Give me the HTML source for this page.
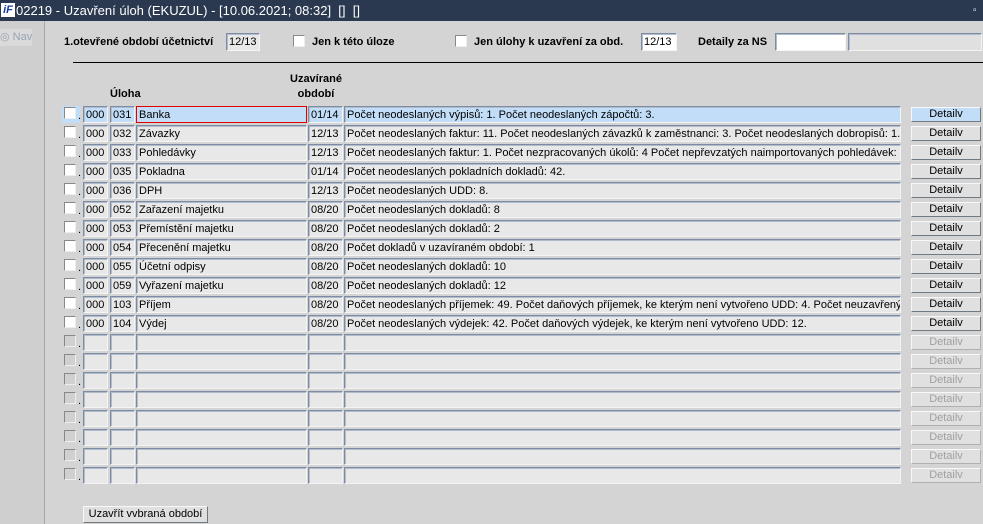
<!DOCTYPE html>
<html><head><meta charset="utf-8"><style>
*{box-sizing:border-box;margin:0;padding:0}
body{width:983px;height:524px;overflow:hidden;background:#d4d4d4;font-family:"Liberation Sans",Arial,sans-serif;font-size:11px;color:#000;position:relative}
.a{position:absolute}
#tb{left:0;top:0;width:983px;height:21px;background:#2a3850;color:#fff;font-size:13px;line-height:21px}
#lp{left:0;top:21px;width:45px;height:503px;background:#cfcfcf;border-right:1px solid #a8a8a8}
.c{position:absolute;height:17px;background:#e8e8e8;border:1px solid;border-color:#7d8ca3 #f4f4f4 #f4f4f4 #7d8ca3;box-shadow:inset 1px 1px 0 #b0bccc;padding-left:2px;padding-top:1px;line-height:15px;white-space:nowrap;overflow:hidden;font-size:11px}
.cb{position:absolute;width:12px;height:12px;background:#fff;border:1px solid;border-color:#888 #eee #eee #888}
.cbd{background:#d0d0d0}
.dot{position:absolute;font-size:11px}
.btn{position:absolute;width:70px;height:15px;background:#e0e0e0;border:1px solid;border-color:#f8f8f8 #707880 #707880 #f8f8f8;text-align:center;line-height:13px;font-size:11px}
.bd{color:#a0a0a0;border-color:#f8f8f8 #b0b0b0 #b0b0b0 #f8f8f8}
.hl{background:#c2ddf7}
b{font-weight:bold}
</style></head><body>
<div id="tb" class="a"><span class="a" style="left:1px;top:3px;width:14px;height:14px;background:#fff;color:#1a3fa0;font:bold italic 11px/14px 'Liberation Sans';text-align:center">iF</span><span class="a" style="left:16px;top:0">02219 - Uzavření úloh (EKUZUL) - [10.06.2021; 08:32] &nbsp;[] &nbsp;[]</span><span class="a" style="left:973px;top:0;font-size:10px">▫</span></div>
<div id="lp" class="a"><div class="a" style="left:0;top:8px;width:32px;height:17px;background:#dadada;color:#9aa4b4;font-size:11px;line-height:17px;white-space:nowrap;overflow:hidden">◎ Nav</div></div>
<b class="a" style="left:64px;top:36px;font-size:11px">1.otevřené období účetnictví</b>
<div class="c" style="left:226px;top:33px;width:34px;height:18px;background:#e8e8e8">12/13</div>
<div class="cb" style="left:293px;top:35px"></div>
<b class="a" style="left:312px;top:36px">Jen k této úloze</b>
<div class="cb" style="left:455px;top:35px"></div>
<b class="a" style="left:474px;top:36px">Jen úlohy k uzavření za obd.</b>
<div class="c" style="left:641px;top:33px;width:36px;height:18px;background:#fff">12/13</div>
<b class="a" style="left:698px;top:36px">Detaily za NS</b>
<div class="c" style="left:775px;top:33px;width:71px;height:18px;background:#fff"></div>
<div class="c" style="left:848px;top:33px;width:134px;height:18px;background:#e0e0e0"></div>
<div class="a" style="left:73px;top:62px;width:910px;height:1px;background:#000"></div>
<b class="a" style="left:110px;top:88px">Úloha</b>
<b class="a" style="left:287px;top:72px;text-align:center;width:58px;line-height:15px">Uzavírané<br>období</b>

<div class="a hl" style="left:62px;top:106px;width:18px;height:17px"></div>
<div class="cb" style="left:64px;top:107px"></div><span class="dot" style="left:78px;top:110px">.</span>
<div class="c hl" style="left:83px;top:106px;width:25px">000</div><div class="c hl" style="left:110px;top:106px;width:25px">031</div><div class="c hl" style="left:136px;top:106px;width:171px;border-color:#e00000;box-shadow:none">Banka</div><div class="c hl" style="left:308px;top:106px;width:35px">01/14</div><div class="c hl" style="left:344px;top:106px;width:557px">Počet neodeslaných výpisů: 1. Počet neodeslaných zápočtů: 3.</div><div class="btn hl" style="left:911px;top:107px">Detailv</div>

<div class="cb" style="left:64px;top:126px"></div><span class="dot" style="left:78px;top:129px">.</span>
<div class="c" style="left:83px;top:125px;width:25px">000</div><div class="c" style="left:110px;top:125px;width:25px">032</div><div class="c" style="left:136px;top:125px;width:171px">Závazky</div><div class="c" style="left:308px;top:125px;width:35px">12/13</div><div class="c" style="left:344px;top:125px;width:557px">Počet neodeslaných faktur: 11. Počet neodeslaných závazků k zaměstnanci: 3. Počet neodeslaných dobropisů: 1.</div><div class="btn" style="left:911px;top:126px">Detailv</div>

<div class="cb" style="left:64px;top:145px"></div><span class="dot" style="left:78px;top:148px">.</span>
<div class="c" style="left:83px;top:144px;width:25px">000</div><div class="c" style="left:110px;top:144px;width:25px">033</div><div class="c" style="left:136px;top:144px;width:171px">Pohledávky</div><div class="c" style="left:308px;top:144px;width:35px">12/13</div><div class="c" style="left:344px;top:144px;width:557px">Počet neodeslaných faktur: 1. Počet nezpracovaných úkolů: 4 Počet nepřevzatých naimportovaných pohledávek: 1</div><div class="btn" style="left:911px;top:145px">Detailv</div>

<div class="cb" style="left:64px;top:164px"></div><span class="dot" style="left:78px;top:167px">.</span>
<div class="c" style="left:83px;top:163px;width:25px">000</div><div class="c" style="left:110px;top:163px;width:25px">035</div><div class="c" style="left:136px;top:163px;width:171px">Pokladna</div><div class="c" style="left:308px;top:163px;width:35px">01/14</div><div class="c" style="left:344px;top:163px;width:557px">Počet neodeslaných pokladních dokladů: 42.</div><div class="btn" style="left:911px;top:164px">Detailv</div>

<div class="cb" style="left:64px;top:183px"></div><span class="dot" style="left:78px;top:186px">.</span>
<div class="c" style="left:83px;top:182px;width:25px">000</div><div class="c" style="left:110px;top:182px;width:25px">036</div><div class="c" style="left:136px;top:182px;width:171px">DPH</div><div class="c" style="left:308px;top:182px;width:35px">12/13</div><div class="c" style="left:344px;top:182px;width:557px">Počet neodeslaných UDD: 8.</div><div class="btn" style="left:911px;top:183px">Detailv</div>

<div class="cb" style="left:64px;top:202px"></div><span class="dot" style="left:78px;top:205px">.</span>
<div class="c" style="left:83px;top:201px;width:25px">000</div><div class="c" style="left:110px;top:201px;width:25px">052</div><div class="c" style="left:136px;top:201px;width:171px">Zařazení majetku</div><div class="c" style="left:308px;top:201px;width:35px">08/20</div><div class="c" style="left:344px;top:201px;width:557px">Počet neodeslaných dokladů: 8</div><div class="btn" style="left:911px;top:202px">Detailv</div>

<div class="cb" style="left:64px;top:221px"></div><span class="dot" style="left:78px;top:224px">.</span>
<div class="c" style="left:83px;top:220px;width:25px">000</div><div class="c" style="left:110px;top:220px;width:25px">053</div><div class="c" style="left:136px;top:220px;width:171px">Přemístění majetku</div><div class="c" style="left:308px;top:220px;width:35px">08/20</div><div class="c" style="left:344px;top:220px;width:557px">Počet neodeslaných dokladů: 2</div><div class="btn" style="left:911px;top:221px">Detailv</div>

<div class="cb" style="left:64px;top:240px"></div><span class="dot" style="left:78px;top:243px">.</span>
<div class="c" style="left:83px;top:239px;width:25px">000</div><div class="c" style="left:110px;top:239px;width:25px">054</div><div class="c" style="left:136px;top:239px;width:171px">Přecenění majetku</div><div class="c" style="left:308px;top:239px;width:35px">08/20</div><div class="c" style="left:344px;top:239px;width:557px">Počet dokladů v uzavíraném období: 1</div><div class="btn" style="left:911px;top:240px">Detailv</div>

<div class="cb" style="left:64px;top:259px"></div><span class="dot" style="left:78px;top:262px">.</span>
<div class="c" style="left:83px;top:258px;width:25px">000</div><div class="c" style="left:110px;top:258px;width:25px">055</div><div class="c" style="left:136px;top:258px;width:171px">Účetní odpisy</div><div class="c" style="left:308px;top:258px;width:35px">08/20</div><div class="c" style="left:344px;top:258px;width:557px">Počet neodeslaných dokladů: 10</div><div class="btn" style="left:911px;top:259px">Detailv</div>

<div class="cb" style="left:64px;top:278px"></div><span class="dot" style="left:78px;top:281px">.</span>
<div class="c" style="left:83px;top:277px;width:25px">000</div><div class="c" style="left:110px;top:277px;width:25px">059</div><div class="c" style="left:136px;top:277px;width:171px">Vyřazení majetku</div><div class="c" style="left:308px;top:277px;width:35px">08/20</div><div class="c" style="left:344px;top:277px;width:557px">Počet neodeslaných dokladů: 12</div><div class="btn" style="left:911px;top:278px">Detailv</div>

<div class="cb" style="left:64px;top:297px"></div><span class="dot" style="left:78px;top:300px">.</span>
<div class="c" style="left:83px;top:296px;width:25px">000</div><div class="c" style="left:110px;top:296px;width:25px">103</div><div class="c" style="left:136px;top:296px;width:171px">Příjem</div><div class="c" style="left:308px;top:296px;width:35px">08/20</div><div class="c" style="left:344px;top:296px;width:557px">Počet neodeslaných příjemek: 49. Počet daňových příjemek, ke kterým není vytvořeno UDD: 4. Počet neuzavřených</div><div class="btn" style="left:911px;top:297px">Detailv</div>

<div class="cb" style="left:64px;top:316px"></div><span class="dot" style="left:78px;top:319px">.</span>
<div class="c" style="left:83px;top:315px;width:25px">000</div><div class="c" style="left:110px;top:315px;width:25px">104</div><div class="c" style="left:136px;top:315px;width:171px">Výdej</div><div class="c" style="left:308px;top:315px;width:35px">08/20</div><div class="c" style="left:344px;top:315px;width:557px">Počet neodeslaných výdejek: 42. Počet daňových výdejek, ke kterým není vytvořeno UDD: 12.</div><div class="btn" style="left:911px;top:316px">Detailv</div>

<div class="cb cbd" style="left:64px;top:335px"></div><span class="dot" style="left:78px;top:338px">.</span>
<div class="c" style="left:83px;top:334px;width:25px"></div><div class="c" style="left:110px;top:334px;width:25px"></div><div class="c" style="left:136px;top:334px;width:171px"></div><div class="c" style="left:308px;top:334px;width:35px"></div><div class="c" style="left:344px;top:334px;width:557px"></div><div class="btn bd" style="left:911px;top:335px">Detailv</div>

<div class="cb cbd" style="left:64px;top:354px"></div><span class="dot" style="left:78px;top:357px">.</span>
<div class="c" style="left:83px;top:353px;width:25px"></div><div class="c" style="left:110px;top:353px;width:25px"></div><div class="c" style="left:136px;top:353px;width:171px"></div><div class="c" style="left:308px;top:353px;width:35px"></div><div class="c" style="left:344px;top:353px;width:557px"></div><div class="btn bd" style="left:911px;top:354px">Detailv</div>

<div class="cb cbd" style="left:64px;top:373px"></div><span class="dot" style="left:78px;top:376px">.</span>
<div class="c" style="left:83px;top:372px;width:25px"></div><div class="c" style="left:110px;top:372px;width:25px"></div><div class="c" style="left:136px;top:372px;width:171px"></div><div class="c" style="left:308px;top:372px;width:35px"></div><div class="c" style="left:344px;top:372px;width:557px"></div><div class="btn bd" style="left:911px;top:373px">Detailv</div>

<div class="cb cbd" style="left:64px;top:392px"></div><span class="dot" style="left:78px;top:395px">.</span>
<div class="c" style="left:83px;top:391px;width:25px"></div><div class="c" style="left:110px;top:391px;width:25px"></div><div class="c" style="left:136px;top:391px;width:171px"></div><div class="c" style="left:308px;top:391px;width:35px"></div><div class="c" style="left:344px;top:391px;width:557px"></div><div class="btn bd" style="left:911px;top:392px">Detailv</div>

<div class="cb cbd" style="left:64px;top:411px"></div><span class="dot" style="left:78px;top:414px">.</span>
<div class="c" style="left:83px;top:410px;width:25px"></div><div class="c" style="left:110px;top:410px;width:25px"></div><div class="c" style="left:136px;top:410px;width:171px"></div><div class="c" style="left:308px;top:410px;width:35px"></div><div class="c" style="left:344px;top:410px;width:557px"></div><div class="btn bd" style="left:911px;top:411px">Detailv</div>

<div class="cb cbd" style="left:64px;top:430px"></div><span class="dot" style="left:78px;top:433px">.</span>
<div class="c" style="left:83px;top:429px;width:25px"></div><div class="c" style="left:110px;top:429px;width:25px"></div><div class="c" style="left:136px;top:429px;width:171px"></div><div class="c" style="left:308px;top:429px;width:35px"></div><div class="c" style="left:344px;top:429px;width:557px"></div><div class="btn bd" style="left:911px;top:430px">Detailv</div>

<div class="cb cbd" style="left:64px;top:449px"></div><span class="dot" style="left:78px;top:452px">.</span>
<div class="c" style="left:83px;top:448px;width:25px"></div><div class="c" style="left:110px;top:448px;width:25px"></div><div class="c" style="left:136px;top:448px;width:171px"></div><div class="c" style="left:308px;top:448px;width:35px"></div><div class="c" style="left:344px;top:448px;width:557px"></div><div class="btn bd" style="left:911px;top:449px">Detailv</div>

<div class="cb cbd" style="left:64px;top:468px"></div><span class="dot" style="left:78px;top:471px">.</span>
<div class="c" style="left:83px;top:467px;width:25px"></div><div class="c" style="left:110px;top:467px;width:25px"></div><div class="c" style="left:136px;top:467px;width:171px"></div><div class="c" style="left:308px;top:467px;width:35px"></div><div class="c" style="left:344px;top:467px;width:557px"></div><div class="btn bd" style="left:911px;top:468px">Detailv</div>

<div class="btn" style="left:83px;top:506px;width:125px;height:17px;line-height:15px">Uzavřít vvbraná období</div>
</body></html>
